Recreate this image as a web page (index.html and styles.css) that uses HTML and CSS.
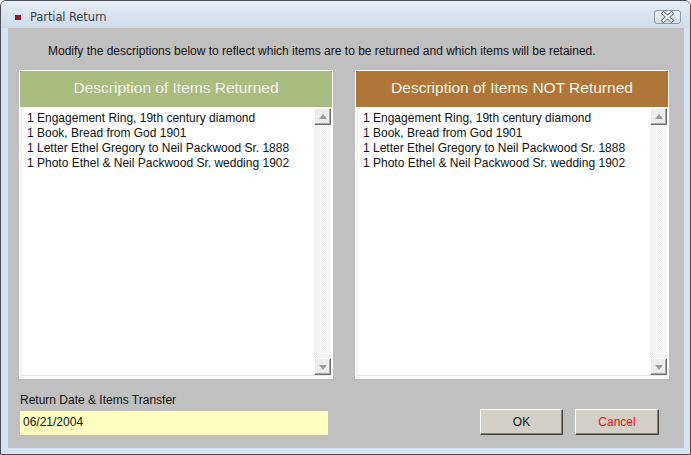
FILE: index.html
```html
<!DOCTYPE html>
<html>
<head>
<meta charset="utf-8">
<link rel="stylesheet" href="styles.css">
</head>
<body>
<div class="window">
  <div class="titlebar">
    <span class="app-icon"></span>
    <span class="title">Partial Return</span>
    <span class="close">
      <svg width="27" height="14" viewBox="0 0 27 14">
        <path d="M9.5 3.5 L17.5 10.5 M17.5 3.5 L9.5 10.5" stroke="#6d7684" stroke-width="4" stroke-linecap="square"/>
        <path d="M9.5 3.5 L17.5 10.5 M17.5 3.5 L9.5 10.5" stroke="#fff" stroke-width="2" stroke-linecap="square"/>
      </svg>
    </span>
  </div>
  <div class="client">
    <p class="intro">Modify the descriptions below to reflect which items are to be returned and which items will be retained.</p>
    <div class="panels">
      <div class="panel">
        <div class="panel-head green">Description of Items Returned</div>
        <div class="panel-body">
          <div class="list">
            <div>1 Engagement Ring, 19th century diamond</div>
            <div>1 Book, Bread from God 1901</div>
            <div>1 Letter Ethel Gregory to Neil Packwood Sr. 1888</div>
            <div>1 Photo Ethel &amp; Neil Packwood Sr. wedding 1902</div>
          </div>
          <div class="scrollbar">
            <div class="sb-btn"><span class="arrow up"></span></div>
            <div class="sb-track"></div>
            <div class="sb-btn"><span class="arrow down"></span></div>
          </div>
        </div>
      </div>
      <div class="panel">
        <div class="panel-head brown">Description of Items NOT Returned</div>
        <div class="panel-body">
          <div class="list">
            <div>1 Engagement Ring, 19th century diamond</div>
            <div>1 Book, Bread from God 1901</div>
            <div>1 Letter Ethel Gregory to Neil Packwood Sr. 1888</div>
            <div>1 Photo Ethel &amp; Neil Packwood Sr. wedding 1902</div>
          </div>
          <div class="scrollbar">
            <div class="sb-btn"><span class="arrow up"></span></div>
            <div class="sb-track"></div>
            <div class="sb-btn"><span class="arrow down"></span></div>
          </div>
        </div>
      </div>
    </div>
    <div class="footer">
      <div class="date-field">
        <div class="label">Return Date &amp; Items Transfer</div>
        <div class="input">06/21/2004</div>
      </div>
      <div class="buttons">
        <div class="btn">OK</div>
        <div class="btn cancel">Cancel</div>
      </div>
    </div>
  </div>
</div>
</body>
</html>
```
FILE: styles.css
```css
* { box-sizing: border-box; }
html, body { margin: 0; padding: 0; }
body {
  width: 691px;
  height: 455px;
  background: #ffffff;
  font-family: "Liberation Sans", Arial, sans-serif;
  overflow: hidden;
}
.window {
  width: 691px;
  height: 455px;
  border: 1px solid #4a4f57;
  border-radius: 6px 6px 0 0;
  background: #d6e3f1;
  display: flex;
  flex-direction: column;
}
.titlebar {
  height: 27px;
  display: flex;
  align-items: center;
  padding-top: 5px;
  background: linear-gradient(#e6edf6, #cfdceb);
  border-radius: 5px 5px 0 0;
}
.app-icon {
  width: 6px;
  height: 5px;
  background: #9b1030;
  margin-left: 14px;
}
.title {
  margin-left: 9px;
  color: #3a3f48;
  font-family: "DejaVu Sans", "Liberation Sans", sans-serif;
  font-size: 11.5px;
  letter-spacing: -0.1px;
}
.close {
  margin-left: auto;
  margin-right: 9px;
  width: 27px;
  height: 14px;
  border: 1px solid #8c97a8;
  border-radius: 3px;
  background: linear-gradient(#eef3f9, #d3dde9);
  display: flex;
}
.close svg { margin: -1px; }
.client {
  flex: 1;
  margin: 0 6px 6px 7px;
  background: #c0c0c0;
  display: flex;
  flex-direction: column;
}
.intro {
  margin: 16px 0 0 40px;
  font-size: 12px;
  line-height: 14px;
  color: #111;
}
.panels {
  display: flex;
  gap: 22px;
  margin: 12px 0 0 11px;
}
.panel {
  width: 314px;
  height: 309px;
  border: 1px solid #ffffff;
  display: flex;
  flex-direction: column;
}
.panel-head {
  height: 36px;
  display: flex;
  align-items: center;
  justify-content: center;
  color: #f4f4ee;
  font-size: 15.5px;
  padding-bottom: 2px;
}
.green { background: #aabd80; }
.brown { background: #b07637; }
.panel-body {
  flex: 1;
  background: #ffffff;
  display: flex;
  padding: 1px;
  border-bottom: 1px solid #ffffff;
}
.list {
  flex: 1;
  padding: 3px 0 0 5px;
  font-size: 12px;
  line-height: 15px;
  color: #111;
  border-left: 1px solid #ececec;
  border-bottom: 1px solid #e4e4e4;
}
.scrollbar {
  width: 17px;
  display: flex;
  flex-direction: column;
  border-bottom: 1px solid #e4e4e4;
}
.sb-btn {
  height: 17px;
  background: #ececec;
  border-top: 1px solid #ffffff;
  border-left: 1px solid #ffffff;
  border-right: 1px solid #6e6e6e;
  border-bottom: 1px solid #6e6e6e;
  box-shadow: inset -1px -1px 0 #a8a8a8;
  display: flex;
  align-items: center;
  justify-content: center;
}
.arrow {
  width: 0;
  height: 0;
  border-left: 4.5px solid transparent;
  border-right: 4.5px solid transparent;
}
.arrow.up { border-bottom: 5px solid #9a9a9a; margin-top: -1px; }
.arrow.down { border-top: 5px solid #9a9a9a; margin-top: 1px; }
.sb-track {
  flex: 1;
  background-color: #ffffff;
  background-image: repeating-conic-gradient(#ebebeb 0 25%, #ffffff 0 50%);
  background-size: 2px 2px;
}
.footer {
  display: flex;
  align-items: flex-end;
  margin: 14px 0 0 12px;
}
.date-field { width: 308px; }
.label {
  font-size: 12px;
  line-height: 14px;
  color: #111;
}
.input {
  margin-top: 4px;
  height: 24px;
  background: #ffffc0;
  font-size: 12px;
  color: #111;
  padding: 4px 0 0 3px;
}
.buttons {
  display: flex;
  gap: 12px;
  margin-left: auto;
  margin-right: 25px;
}
.btn {
  width: 83px;
  height: 26px;
  background: #d4d0c8;
  border-top: 1px solid #ffffff;
  border-left: 1px solid #ffffff;
  border-right: 1px solid #404040;
  border-bottom: 1px solid #404040;
  box-shadow: inset -1px -1px 0 #808080;
  display: flex;
  align-items: center;
  justify-content: center;
  font-size: 12px;
  color: #111;
}
.btn.cancel { width: 84px; color: #ee1111; }
```
